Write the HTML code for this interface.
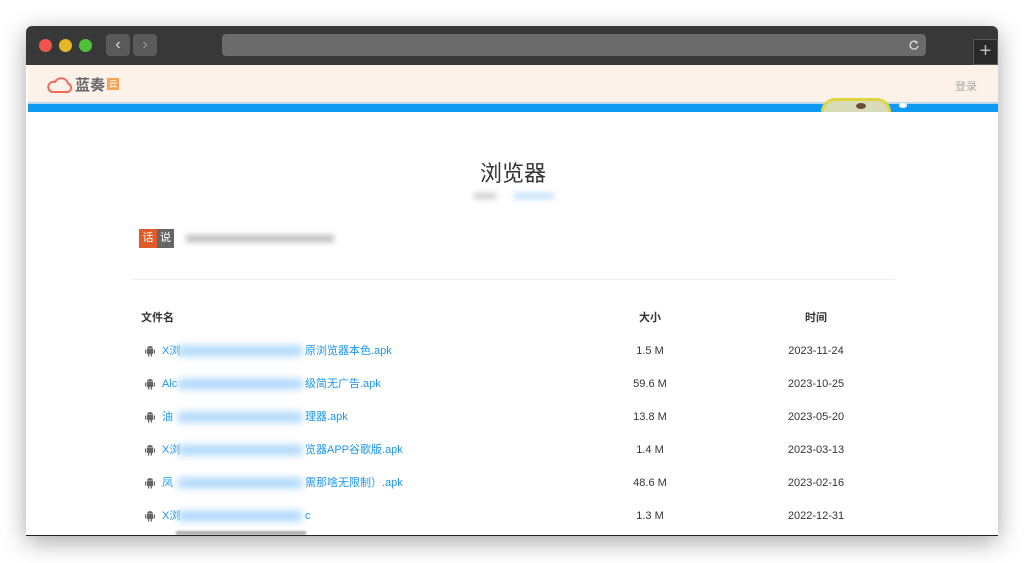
<!DOCTYPE html>
<html><head><meta charset="utf-8"><style>
*{margin:0;padding:0;box-sizing:border-box}
body{width:1024px;height:563px;background:#fff;font-family:"Liberation Sans","Noto Sans CJK SC",sans-serif;position:relative;overflow:hidden}
.shadow{position:absolute;left:26px;top:26px;width:972px;height:510px;box-shadow:0 6px 24px rgba(0,0,0,.35);border-radius:6px}
.win{position:absolute;left:26px;top:26px;width:972px;height:510px;border-radius:6px 6px 0 0;overflow:hidden;background:#fff;border-bottom:1px solid #222}
.bar{position:absolute;left:0;top:0;width:972px;height:39px;background:#383838}
.dot{position:absolute;top:13px;width:13px;height:13px;border-radius:50%}
.nav{position:absolute;top:8px;width:24px;height:22px;background:#5a5a5a;border-radius:4px;color:#ddd;font-size:16px;text-align:center;line-height:22px}
.url{position:absolute;left:196px;top:8px;width:704px;height:22px;background:#6b6b6b;border-radius:4px}
.hdr{position:absolute;left:2px;top:39px;width:970px;height:37px;background:#fdf2e9}
.blue{position:absolute;left:2px;top:76px;width:970px;height:10px;background:#0f9bf2;border-top:2px solid #b8d8ea}
.blur{position:absolute;filter:blur(3px)}
.row{position:absolute;left:0;width:972px;height:16px;font-size:11px;line-height:16px;color:#333}
.row span{position:absolute;top:0}
.fn{left:136px;color:#1a96f0}
.sf{left:279px;color:#1a96f0}
.ic{position:absolute;left:118px;top:2px;width:12px;height:12px}
.sz{left:600px;width:48px;text-align:center}
.tm{left:750px;width:80px;text-align:center}
</style></head><body>
<div class="shadow"></div>
<div class="win">
<div class="bar">
<div class="dot" style="left:13px;background:#f2534d"></div>
<div class="dot" style="left:33px;background:#e5b726"></div>
<div class="dot" style="left:53px;background:#4ec13a"></div>
<div class="nav" style="left:80px">‹</div>
<div class="nav" style="left:107px;color:#999">›</div>
<div class="url"><svg style="position:absolute;right:6px;top:5px" width="12" height="12" viewBox="0 0 12 12"><path d="M9.5 4A4 4 0 1 0 10 7" fill="none" stroke="#ddd" stroke-width="1.3"/><path d="M7.5 1.5L10 4 7 4.5z" fill="#ddd"/></svg></div>
<div style="position:absolute;left:947px;top:13px;width:25px;height:26px;background:#2a2a2a;border:1px solid #555;color:#bbb;font-size:20px;text-align:center;line-height:22px">+</div>
</div>
<div class="hdr">
<svg style="position:absolute;left:18px;top:11px" width="28" height="18" viewBox="0 0 28 18"><path d="M6 16H22A4.5 4.5 0 0 0 22 7.5 7 7 0 0 0 9 6 5 5 0 0 0 6 16z" fill="none" stroke="#f46a5a" stroke-width="2"/></svg>
<div style="position:absolute;left:47px;top:9px;font-size:15px;font-weight:bold;color:#666">蓝奏</div>
<div style="position:absolute;left:79px;top:13px;width:12px;height:12px;background:#f7a255;color:#fff;font-size:9px;line-height:12px;text-align:center">云</div>
<div style="position:absolute;left:927px;top:13px;font-size:11px;color:#aaa">登录</div>
</div>
<div class="blue"></div>
<div style="position:absolute;left:795px;top:72px;width:70px;height:14px;background:#d9dcb8;border-radius:30px 30px 0 0;border:3px solid #e0d540;border-bottom:none"></div>
<div style="position:absolute;left:830px;top:77px;width:10px;height:6px;background:#6a4d3a;border-radius:50%"></div>
<div style="position:absolute;left:873px;top:77px;width:8px;height:5px;background:#fff;border-radius:50%"></div>
<div style="position:absolute;top:130px;width:1024px;text-align:center;font-size:22px;color:#333;left:-25px">浏览器</div>
<div class="blur" style="left:448px;top:167px;width:22px;height:6px;background:#ccc"></div>
<div class="blur" style="left:488px;top:167px;width:40px;height:6px;background:#bfe0fb"></div>
<div style="position:absolute;left:113px;top:203px;width:18px;height:19px;background:#e05a2b;color:#fff;font-size:11px;line-height:19px;text-align:center">话</div>
<div style="position:absolute;left:131px;top:203px;width:17px;height:19px;background:#666;color:#fff;font-size:11px;line-height:19px;text-align:center">说</div>
<div class="blur" style="left:160px;top:209px;width:148px;height:7px;background:#bbb"></div>
<div style="position:absolute;left:105px;top:253px;width:764px;height:1px;background:#eee"></div>
<div class="row" style="top:284px;font-weight:bold"><span style="left:115px">文件名</span><span class="sz">大小</span><span class="tm">时间</span></div>

<div class="row" style="top:317px"><svg class="ic" viewBox="0 0 12 12"><path d="M3 4h6v5H3zM1 4.5h1.3v4H1zM9.7 4.5H11v4H9.7zM4 9h1.3v2.5H4zM6.7 9H8v2.5H6.7zM3 3.6A3 2.6 0 0 1 9 3.6z" fill="#666"/></svg><span class="fn">X浏</span><span class="sf">原浏览器本色.apk</span><span class="sz">1.5 M</span><span class="tm">2023-11-24</span></div>
<div class="row" style="top:350px"><svg class="ic" viewBox="0 0 12 12"><path d="M3 4h6v5H3zM1 4.5h1.3v4H1zM9.7 4.5H11v4H9.7zM4 9h1.3v2.5H4zM6.7 9H8v2.5H6.7zM3 3.6A3 2.6 0 0 1 9 3.6z" fill="#666"/></svg><span class="fn">Alc</span><span class="sf">级简无广告.apk</span><span class="sz">59.6 M</span><span class="tm">2023-10-25</span></div>
<div class="row" style="top:383px"><svg class="ic" viewBox="0 0 12 12"><path d="M3 4h6v5H3zM1 4.5h1.3v4H1zM9.7 4.5H11v4H9.7zM4 9h1.3v2.5H4zM6.7 9H8v2.5H6.7zM3 3.6A3 2.6 0 0 1 9 3.6z" fill="#666"/></svg><span class="fn">油</span><span class="sf">理器.apk</span><span class="sz">13.8 M</span><span class="tm">2023-05-20</span></div>
<div class="row" style="top:416px"><svg class="ic" viewBox="0 0 12 12"><path d="M3 4h6v5H3zM1 4.5h1.3v4H1zM9.7 4.5H11v4H9.7zM4 9h1.3v2.5H4zM6.7 9H8v2.5H6.7zM3 3.6A3 2.6 0 0 1 9 3.6z" fill="#666"/></svg><span class="fn">X浏</span><span class="sf">览器APP谷歌版.apk</span><span class="sz">1.4 M</span><span class="tm">2023-03-13</span></div>
<div class="row" style="top:449px"><svg class="ic" viewBox="0 0 12 12"><path d="M3 4h6v5H3zM1 4.5h1.3v4H1zM9.7 4.5H11v4H9.7zM4 9h1.3v2.5H4zM6.7 9H8v2.5H6.7zM3 3.6A3 2.6 0 0 1 9 3.6z" fill="#666"/></svg><span class="fn">凤</span><span class="sf">需那啥无限制）.apk</span><span class="sz">48.6 M</span><span class="tm">2023-02-16</span></div>
<div class="row" style="top:482px"><svg class="ic" viewBox="0 0 12 12"><path d="M3 4h6v5H3zM1 4.5h1.3v4H1zM9.7 4.5H11v4H9.7zM4 9h1.3v2.5H4zM6.7 9H8v2.5H6.7zM3 3.6A3 2.6 0 0 1 9 3.6z" fill="#666"/></svg><span class="fn">X浏</span><span class="sf" style="left:279px">c</span><span class="sz">1.3 M</span><span class="tm">2022-12-31</span></div>

<div class="blur" style="left:152px;top:320px;width:124px;height:10px;background:#a9d6fa;filter:blur(4px)"></div>
<div class="blur" style="left:152px;top:353px;width:124px;height:10px;background:#a9d6fa;filter:blur(4px)"></div>
<div class="blur" style="left:152px;top:386px;width:124px;height:10px;background:#a9d6fa;filter:blur(4px)"></div>
<div class="blur" style="left:152px;top:419px;width:124px;height:10px;background:#a9d6fa;filter:blur(4px)"></div>
<div class="blur" style="left:152px;top:452px;width:124px;height:10px;background:#a9d6fa;filter:blur(4px)"></div>
<div class="blur" style="left:152px;top:485px;width:124px;height:10px;background:#a9d6fa;filter:blur(4px)"></div>
<div style="position:absolute;left:150px;top:505px;width:130px;height:4px;background:#aaa;filter:blur(1px)"></div>
</div>
</body></html>
